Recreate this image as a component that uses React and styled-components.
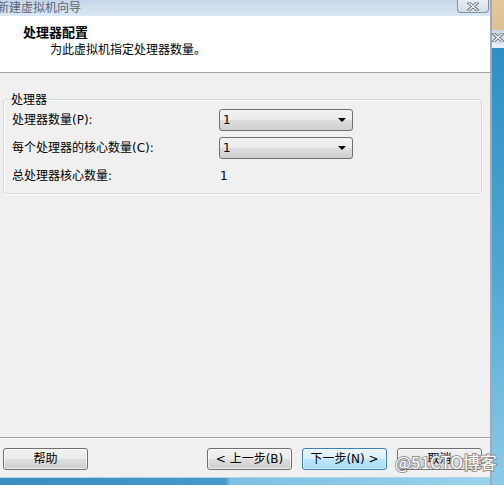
import React from "react";
import styled, { createGlobalStyle } from "styled-components";

const Global = createGlobalStyle`
  html, body { margin: 0; padding: 0; background: #f0f0f0; }
  body { font-family: "DejaVu Sans", "Noto Sans CJK SC", sans-serif; font-size: 12px; color: #000; }
`;

const Screen = styled.div`
  position: relative;
  width: 504px;
  height: 485px;
  display: flex;
  overflow: hidden;
`;

const Window = styled.div`
  width: 492px;
  display: flex;
  flex-direction: column;
  border-right: 2px solid #9fabb8;
  background: #f0f0f0;
`;

const TitleBar = styled.div`
  height: 16px;
  flex: none;
  display: flex;
  align-items: flex-start;
  justify-content: space-between;
  background: linear-gradient(to bottom, #c6d6ea, #dbe6f3);
`;

const TitleText = styled.span`
  margin-left: -3px;
  line-height: 14px;
  font-family: "Noto Sans CJK SC", sans-serif;
  font-size: 12px;
  color: #5b6573;
`;

const CloseButton = styled.div`
  width: 30px;
  height: 12px;
  margin-right: 1px;
  border: 1px solid #8392a4;
  border-top: none;
  border-radius: 0 0 4px 4px;
  background: linear-gradient(to bottom, #e9eef5, #d2dbe6);
  display: flex;
  align-items: center;
  justify-content: center;
`;

const Header = styled.div`
  flex: none;
  background: #fff;
  border-bottom: 1px solid #a0a0a0;
  padding-top: 8px;
  box-sizing: border-box;
  height: 57px;
`;

const HeaderTitle = styled.div`
  padding-left: 23px;
  font-family: "Noto Sans CJK SC", sans-serif;
  font-weight: 700;
  font-size: 13px;
  line-height: 16px;
`;

const HeaderSub = styled.div`
  margin-top: 1px;
  padding-left: 50px;
  font-family: "Noto Sans CJK SC", sans-serif;
  font-size: 12px;
  line-height: 16px;
`;

const Content = styled.div`
  flex: 1;
  padding: 19px 8px 0 3px;
`;

const Group = styled.fieldset`
  margin: 0;
  padding: 0 0 6px 8px;
  border: 1px solid #d5dbe0;
  border-radius: 3px;
  box-shadow: inset 1px 1px 0 #fff, 1px 1px 0 #fff;
`;

const Legend = styled.legend`
  padding: 0 1px;
  margin-left: -2px;
  line-height: 14px;
  font-family: "Noto Sans CJK SC", sans-serif;
`;

const Grid = styled.div`
  display: grid;
  grid-template-columns: 207px 134px;
  grid-auto-rows: 22px;
  row-gap: 6px;
  padding-top: 3px;
  align-items: center;
`;

const Label = styled.div`
  line-height: 16px;
  white-space: nowrap;
`;

const Combo = styled.div`
  height: 22px;
  box-sizing: border-box;
  border: 1px solid #707070;
  border-radius: 3px;
  background: linear-gradient(to bottom, #f2f2f2 0%, #ebebeb 50%, #dddddd 51%, #cfcfcf 100%);
  display: flex;
  align-items: center;
  justify-content: space-between;
  padding: 0 6px 0 3px;
`;

const Arrow = styled.span`
  width: 0;
  height: 0;
  border-left: 4px solid transparent;
  border-right: 4px solid transparent;
  border-top: 4px solid #000;
`;

const Value = styled.div`
  padding-left: 1px;
`;

const Separator = styled.div`
  height: 1px;
  flex: none;
  background: #a0a0a0;
  box-shadow: 0 1px 0 #fff;
`;

const Footer = styled.div`
  height: 39px;
  flex: none;
  box-sizing: border-box;
  padding: 10px 8px 7px 3px;
  display: flex;
  gap: 10px;
`;

const Spacer = styled.div`
  flex: 1;
`;

const Button = styled.div`
  width: 85px;
  height: 22px;
  box-sizing: border-box;
  border: 1px solid ${(p) => (p.$default ? "#3c7fb1" : "#707070")};
  border-radius: 3px;
  background: ${(p) =>
    p.$default
      ? "linear-gradient(to bottom, #eaf6fd 0%, #d9f0fc 50%, #bee6fd 51%, #a7d9f5 100%)"
      : "linear-gradient(to bottom, #f2f2f2 0%, #ebebeb 50%, #dddddd 51%, #cfcfcf 100%)"};
  box-shadow: inset 0 0 0 1px rgba(255, 255, 255, 0.6);
  display: flex;
  align-items: center;
  justify-content: center;
  line-height: 16px;
  white-space: nowrap;
`;

const BottomFrame = styled.div`
  height: 8px;
  flex: none;
  border-top: 1px solid #b4d3e6;
  box-sizing: border-box;
  background: linear-gradient(to right, #3b8cc2 0%, #4599cb 46%, #7cc0e2 47%, #9ad3ec 100%);
`;

const Desktop = styled.div`
  flex: 1;
  display: flex;
  flex-direction: column;
`;

const DeskBeige = styled.div`
  height: 30px;
  background: linear-gradient(to bottom, #e6c99b, #dcc197);
`;

const DeskTitle = styled.div`
  height: 14px;
  background: linear-gradient(to bottom, #c9d6e4, #dce6f1);
  display: flex;
  align-items: center;
  overflow: hidden;
`;

const DeskLight = styled.div`
  height: 4px;
  background: #e8eef5;
`;

const DeskBlue = styled.div`
  flex: 1;
  background: linear-gradient(to bottom, #2f8fc3, #4ea6d2 50%, #8dcbe8);
`;

const Watermark = styled.div`
  position: absolute;
  left: 395px;
  top: 452px;
  font-family: "Noto Sans CJK SC", sans-serif;
  font-size: 17px;
  line-height: 20px;
  color: #fff;
  -webkit-text-stroke: 2px rgba(120, 120, 120, 0.75);
  paint-order: stroke fill;
  white-space: nowrap;
  pointer-events: none;
`;

const XIcon = () => (
  <svg width="12" height="9" viewBox="0 0 12 9">
    <path d="M2 1 L10 8 M10 1 L2 8" stroke="#5b6470" strokeWidth="3" strokeLinecap="square" />
    <path d="M2 1 L10 8 M10 1 L2 8" stroke="#fff" strokeWidth="1.4" strokeLinecap="square" />
  </svg>
);

export default function App() {
  return (
    <>
      <Global />
      <Screen>
        <Window>
          <TitleBar>
            <TitleText>新建虚拟机向导</TitleText>
            <CloseButton>
              <XIcon />
            </CloseButton>
          </TitleBar>
          <Header>
            <HeaderTitle>处理器配置</HeaderTitle>
            <HeaderSub>为此虚拟机指定处理器数量。</HeaderSub>
          </Header>
          <Content>
            <Group>
              <Legend>处理器</Legend>
              <Grid>
                <Label>处理器数量(P):</Label>
                <Combo>
                  <span>1</span>
                  <Arrow />
                </Combo>
                <Label>每个处理器的核心数量(C):</Label>
                <Combo>
                  <span>1</span>
                  <Arrow />
                </Combo>
                <Label>总处理器核心数量:</Label>
                <Value>1</Value>
              </Grid>
            </Group>
          </Content>
          <Separator />
          <Footer>
            <Button>帮助</Button>
            <Spacer />
            <Button>&lt; 上一步(B)</Button>
            <Button $default>下一步(N) &gt;</Button>
            <Button>取消</Button>
          </Footer>
          <BottomFrame />
        </Window>
        <Desktop>
          <DeskBeige />
          <DeskTitle>
            <XIcon />
          </DeskTitle>
          <DeskLight />
          <DeskBlue />
        </Desktop>
        <Watermark>@51CTO博客</Watermark>
      </Screen>
    </>
  );
}
